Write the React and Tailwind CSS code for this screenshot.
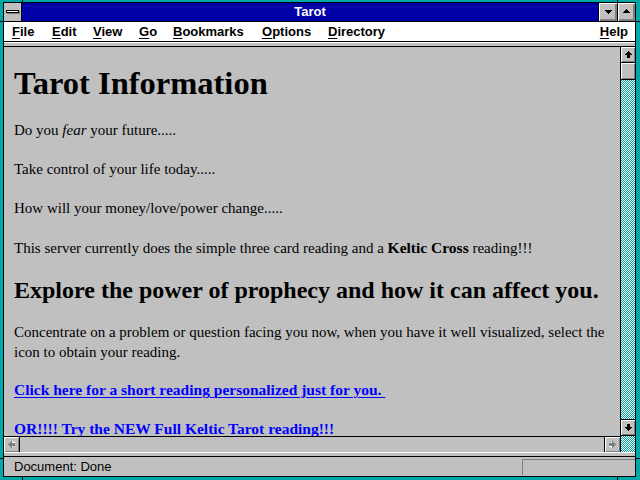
import React from "react";

const ARROW = "M3 0h1v1h1v1h1v1h1v1H5v3H2V4H0V3h1V2h1V1h1z";
const TRI_DOWN = "M0 0h7v1h-1v1h-1v1h-1v1h-1v-1h-1v-1h-1v-1h-1z";

function Arrow({ rot, disabled }) {
  return (
    <svg width="7" height="7" viewBox="0 0 7 7" shapeRendering="crispEdges" style={{ transform: `rotate(${rot}deg)` }}>
      {disabled ? (
        <>
          <path d={ARROW} fill="#ffffff" transform="translate(1 1)" />
          <path d={ARROW} fill="#808080" />
        </>
      ) : (
        <path d={ARROW} fill="#000000" />
      )}
    </svg>
  );
}

function ScrollBtn({ rot, disabled, className }) {
  return (
    <div className={"flex items-center justify-center bg-[#c0c0c0] shadow-[inset_1px_1px_0_#ffffff,inset_-1px_-1px_0_#808080] " + className}>
      <Arrow rot={rot} disabled={disabled} />
    </div>
  );
}

function MenuItem({ first, rest, w }) {
  return (
    <div className={w}>
      <span className="underline underline-offset-2 decoration-1">{first}</span>
      {rest}
    </div>
  );
}

export default function App() {
  return (
    <div className="relative w-[640px] h-[480px] bg-[#00a8a8] pl-[3px] pr-[4px] pt-[2px] pb-[3px] font-['Liberation_Sans',Arial,sans-serif]">
      {/* frame notches */}
      <div className="absolute left-[22px] top-0 w-px h-[2px] bg-black" />
      <div className="absolute left-[617px] top-0 w-px h-[2px] bg-black" />
      <div className="absolute left-[22px] bottom-0 w-px h-[3px] bg-black" />
      <div className="absolute left-[617px] bottom-0 w-px h-[3px] bg-black" />
      <div className="absolute left-0 top-[21px] w-[3px] h-px bg-black" />
      <div className="absolute right-0 top-[21px] w-[4px] h-px bg-black" />
      <div className="absolute left-0 top-[458px] w-[3px] h-px bg-black" />
      <div className="absolute right-0 top-[458px] w-[4px] h-px bg-black" />

      <div className="flex flex-col w-full h-full border border-black">
        {/* title bar */}
        <div className="flex h-[19px] border-b border-black">
          <div className="w-[18px] h-[18px] bg-[#c0c0c0] border-r border-black flex items-center justify-center">
            <svg width="14" height="4" viewBox="0 0 14 4" shapeRendering="crispEdges">
              <rect x="0" y="0" width="13" height="3" fill="#000" />
              <rect x="1" y="1" width="11" height="1" fill="#fff" />
              <rect x="1" y="3" width="13" height="1" fill="#808080" />
              <rect x="13" y="1" width="1" height="3" fill="#808080" />
            </svg>
          </div>
          <div className="flex-1 bg-[#0000a8] text-white font-bold text-[13px] leading-[18px] text-center">Tarot</div>
          <div className="w-[19px] border-l border-black bg-[#c0c0c0] shadow-[inset_1px_1px_0_#ffffff,inset_-2px_-2px_0_#808080] flex items-center justify-center">
            <svg width="7" height="4" viewBox="0 0 7 4" shapeRendering="crispEdges">
              <path d={TRI_DOWN} fill="#000" />
            </svg>
          </div>
          <div className="w-[18px] border-l border-black bg-[#c0c0c0] shadow-[inset_1px_1px_0_#ffffff,inset_-2px_-2px_0_#808080] flex items-center justify-center">
            <svg width="7" height="4" viewBox="0 0 7 4" shapeRendering="crispEdges" className="rotate-180 mb-[2px]">
              <path d={TRI_DOWN} fill="#000" />
            </svg>
          </div>
        </div>

        {/* menu bar */}
        <div className="flex h-[19px] bg-white text-black font-bold text-[13px] leading-[19px] pl-[8px] pr-[7px]">
          <MenuItem first="F" rest="ile" w="w-[40px]" />
          <MenuItem first="E" rest="dit" w="w-[41px]" />
          <MenuItem first="V" rest="iew" w="w-[46px]" />
          <MenuItem first="G" rest="o" w="w-[34px]" />
          <MenuItem first="B" rest="ookmarks" w="w-[89px]" />
          <MenuItem first="O" rest="ptions" w="w-[66px]" />
          <MenuItem first="D" rest="irectory" w="w-[80px]" />
          <div className="ml-auto">
            <span className="underline underline-offset-2 decoration-1">H</span>elp
          </div>
        </div>

        {/* collapsed toolbar separator */}
        <div className="flex flex-col h-[6px] border-y border-black">
          <div className="h-px bg-white" />
          <div className="flex-1 bg-[#c0c0c0]" />
        </div>

        {/* main */}
        <div className="flex h-[405px]">
          <div className="flex flex-col flex-1 min-w-0">
            <div className="flex-1 overflow-hidden bg-[#c0c0c0] pl-[10px] pt-[17px] font-['Liberation_Serif','Times_New_Roman',serif] text-black text-[15px] leading-[19.5px]">
              <h1 className="text-[32.5px] leading-[39px] font-bold">Tarot Information</h1>
              <p className="mt-[18px]">
                Do you <i>fear</i> your future.....
              </p>
              <p className="mt-[19.5px]">Take control of your life today.....</p>
              <p className="mt-[19.5px]">How will your money/love/power change.....</p>
              <p className="mt-[19px]">
                This server currently does the simple three card reading and a <b className="text-[15.5px]">Keltic Cross</b> reading!!!
              </p>
              <h2 className="mt-[17.5px] text-[24px] leading-[28px] font-bold whitespace-nowrap">
                Explore the power of prophecy and how it can affect you.
              </h2>
              <p className="mt-[19.5px] whitespace-nowrap">
                Concentrate on a problem or question facing you now, when you have it well visualized, select the
                <br />
                icon to obtain your reading.
              </p>
              <p className="mt-[18px] font-bold text-[15.5px] text-[#0000ff] whitespace-nowrap">
                <span className="underline decoration-1 underline-offset-2">Click here for a short reading personalized just for you.&nbsp;</span>
              </p>
              <p className="mt-[19px] font-bold text-[15.5px] text-[#0000ff] whitespace-nowrap">
                <span className="underline decoration-1 underline-offset-2">OR!!!! Try the NEW Full Keltic Tarot reading!!!</span>
              </p>
            </div>
            {/* horizontal scrollbar */}
            <div className="flex h-[16px] border-t border-black bg-[#c0c0c0]">
              <ScrollBtn rot={-90} disabled className="w-[16px] border-r border-black" />
              <div className="flex-1" />
              <ScrollBtn rot={90} disabled className="w-[16px] border-l border-black" />
            </div>
          </div>
          {/* vertical scrollbar */}
          <div className="flex flex-col w-[15px] border-l border-black">
            <ScrollBtn rot={0} className="h-[16px] border-b border-black" />
            <div className="h-[17px] border-b border-black bg-[#c0c0c0] shadow-[inset_1px_1px_0_#ffffff,inset_-1px_-1px_0_#808080]" />
            <div className="flex-1 bg-[#00a8a8] bg-[image:conic-gradient(#ffffff_25%,#00a8a8_0_50%,#ffffff_0_75%,#00a8a8_0)] bg-[size:2px_2px]" />
            <ScrollBtn rot={180} className="h-[17px] border-y border-black" />
            <div className="h-[16px] bg-[#00a8a8] bg-[image:conic-gradient(#ffffff_25%,#00a8a8_0_50%,#ffffff_0_75%,#00a8a8_0)] bg-[size:2px_2px]" />
          </div>
        </div>

        {/* status separator */}
        <div className="flex flex-col h-[5px] border-b border-black">
          <div className="h-px bg-white" />
          <div className="flex-1 bg-[#c0c0c0]" />
        </div>

        {/* status bar */}
        <div className="flex items-start h-[19px] bg-[#c0c0c0] pl-[10px] text-[13px] leading-[19px] text-black">
          <div className="flex-1">Document: Done</div>
          <div className="mt-[2px] w-[113px] h-[16px] border-t border-l border-[#808080] border-r-white border-b-white" />
        </div>
      </div>
    </div>
  );
}
